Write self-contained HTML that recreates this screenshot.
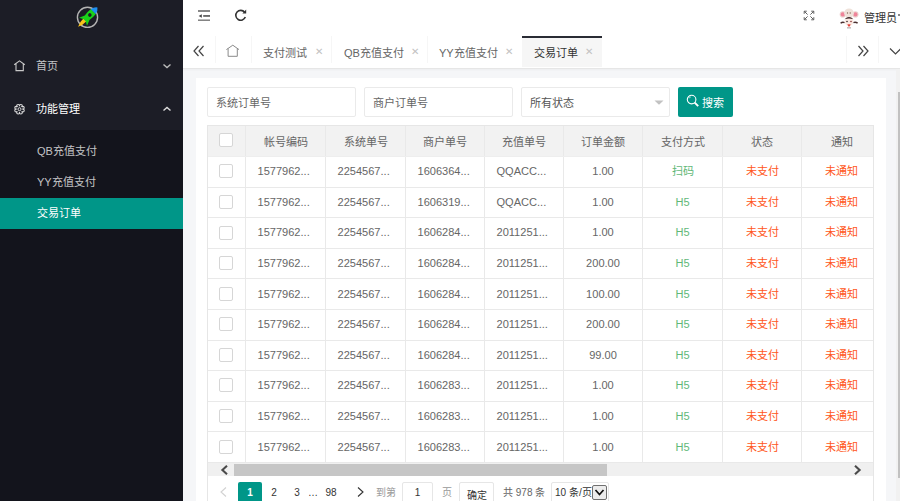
<!DOCTYPE html>
<html lang="zh-CN">
<head>
<meta charset="utf-8">
<style>
*{margin:0;padding:0;box-sizing:border-box;}
html,body{width:900px;height:501px;overflow:hidden;background:#f5f6f8;font-family:"Liberation Sans",sans-serif;font-size:11.05px;color:#666;}
.abs{position:absolute;}
#side{position:absolute;left:0;top:0;width:183px;height:501px;background:#1c1d26;}
#side .child{position:absolute;left:0;top:130px;width:183px;height:372px;background:#13141c;}
.mi{position:absolute;left:36px;color:rgba(255,255,255,.75);white-space:nowrap;line-height:12px;}
#header{position:absolute;left:183px;top:0;width:717px;height:36px;background:#fff;}
#tabs{position:absolute;left:183px;top:36px;width:717px;height:33px;background:#fff;border-bottom:1px solid #e6e6e6;box-shadow:0 1px 2px rgba(0,0,0,.04);}
.sep{position:absolute;top:0;width:1px;height:27px;background:#f6f6f6;}
.tt{position:absolute;top:10.5px;line-height:12px;color:#666;white-space:nowrap;}
.tx{position:absolute;top:11px;line-height:10px;color:#c2c2c2;font-size:9.5px;}
#card{position:absolute;left:196px;top:78px;width:690px;height:430px;background:#fff;}
.inp{position:absolute;top:87px;height:30px;background:#fff;border:1px solid #eaeaea;border-radius:2px;}
.inp span{position:absolute;left:8px;top:9px;line-height:12px;color:#666;white-space:nowrap;}
#tv{position:absolute;left:207px;top:125px;width:667px;height:380px;border:1px solid #e6e6e6;overflow:hidden;}
table{border-collapse:collapse;table-layout:fixed;position:absolute;left:-1px;top:-1px;width:1074px;}
td,th{border:1px solid #e9e9e9;text-align:center;font-weight:normal;white-space:nowrap;overflow:hidden;color:#666;line-height:12px;padding:0;}
th{background:#f2f2f2;height:31px;padding-top:1.5px;border-bottom-color:#eeeeee;}
td{height:30.6px;padding-bottom:1px;}
.cb{display:inline-block;width:14px;height:14px;border:1px solid #d6d6d6;border-radius:2px;background:#fff;vertical-align:middle;position:relative;left:-1px;}
.g{color:#5fb878;}
.r{color:#ff5722;}
.pg{position:absolute;top:486.5px;line-height:12px;font-size:10px;text-align:center;white-space:nowrap;color:#333;}
.l{text-align:left;padding-left:11.5px;}
</style>
</head>
<body>
<div id="side">
  <div class="child"></div>
  <!-- logo -->
  <svg class="abs" style="left:72px;top:2px" width="32" height="32" viewBox="0 0 32 32">
    <circle cx="15.5" cy="15.3" r="10.1" fill="none" stroke="#b4b4b4" stroke-width="1.4"/>
    <g transform="translate(15.7,15.15) rotate(45)">
      <path d="M-2.1,3 Q-2.3,9.5 0,13.6 Q2.3,9.5 2.1,3 Z" fill="#f7c21a"/>
      <path d="M-3.5,-8 Q-4,-3 -3.3,0.8 L-5.6,6.6 L-1.8,4.4 L1.8,4.4 L5.6,6.6 L3.3,0.8 Q4,-3 3.5,-8 Z" fill="#19d219"/>
      <path d="M-3.5,-7.8 Q-3,-11.5 0,-13.8 Q3,-11.5 3.5,-7.8 Z" fill="#1e90f0"/>
      <circle cx="0" cy="-3" r="1.8" fill="#1c1d26"/>
    </g>
  </svg>
  <!-- home -->
  <svg class="abs" style="left:8px;top:54px" width="24" height="24" viewBox="0 0 24 24">
    <path d="M6.2 10.8 L11.5 6.9 L16.8 10.8 M8 9.5 V16.6 H15.3 V9.5" fill="none" stroke="#c8c8c8" stroke-width="1.1"/>
  </svg>
  <div class="mi" style="top:60px">首页</div>
  <svg class="abs" style="left:162px;top:62px" width="10" height="8" viewBox="0 0 10 8"><path d="M1.5 2.5 L5 5.5 L8.5 2.5" fill="none" stroke="#bbb" stroke-width="1.4"/></svg>
  <!-- gear -->
  <svg class="abs" style="left:8px;top:97px" width="24" height="24" viewBox="0 0 24 24">
    <g fill="none" stroke="#dcdcdc" stroke-width="1.05"><circle cx="14.73" cy="13.54" r="1.5"/><circle cx="12.84" cy="15.43" r="1.5"/><circle cx="10.16" cy="15.43" r="1.5"/><circle cx="8.27" cy="13.54" r="1.5"/><circle cx="8.27" cy="10.86" r="1.5"/><circle cx="10.16" cy="8.97" r="1.5"/><circle cx="12.84" cy="8.97" r="1.5"/><circle cx="14.73" cy="10.86" r="1.5"/></g>
    <circle cx="11.5" cy="12.2" r="2.9" fill="#1c1d26"/>
    <circle cx="11.5" cy="12.2" r="1.5" fill="none" stroke="#dcdcdc" stroke-width="1"/>
  </svg>
  <div class="mi" style="top:103px;color:#fff">功能管理</div>
  <svg class="abs" style="left:162px;top:105px" width="10" height="8" viewBox="0 0 10 8"><path d="M1.5 5.5 L5 2.5 L8.5 5.5" fill="none" stroke="#ddd" stroke-width="1.4"/></svg>
  <div class="mi" style="top:145px;left:37px">QB充值支付</div>
  <div class="mi" style="top:176px;left:37px">YY充值支付</div>
  <div class="abs" style="left:0;top:198px;width:183px;height:31px;background:#009688"></div>
  <div class="mi" style="top:207px;left:37px;color:#fff">交易订单</div>
</div>


<div id="header">
  <!-- fold icon -->
  <svg class="abs" style="left:14px;top:9px" width="14" height="14" viewBox="0 0 14 14">
    <rect x="1" y="1.3" width="12" height="1.4" fill="#555"/>
    <rect x="6.2" y="6.2" width="6.8" height="1.5" fill="#444"/>
    <path d="M1.6 6.95 L4.8 5.2 L4.8 8.7 Z" fill="#444"/>
    <rect x="1" y="10.5" width="12" height="1.4" fill="#777"/>
  </svg>
  <!-- refresh -->
  <svg class="abs" style="left:51px;top:8px" width="14" height="14" viewBox="0 0 14 14">
    <path d="M10.6 4.3 A4.9 4.9 0 1 0 11.3 9" fill="none" stroke="#333" stroke-width="1.6"/>
    <path d="M8.4 5.6 L12.2 5.6 L12.2 1.6 Z" fill="#333"/>
  </svg>
  <!-- fullscreen -->
  <svg class="abs" style="left:616px;top:6px" width="20" height="20" viewBox="0 0 20 20">
    <g fill="none" stroke="#5a5a5a" stroke-width="0.95">
      <path d="M5.2 7.8 V5.2 H7.8 M5.4 5.4 L8.6 8.6"/>
      <path d="M14.8 7.8 V5.2 H12.2 M14.6 5.4 L11.4 8.6"/>
      <path d="M5.2 11.2 V13.8 H7.8 M5.4 13.6 L8.6 10.4"/>
      <path d="M14.8 11.2 V13.8 H12.2 M14.6 13.6 L11.4 10.4"/>
    </g>
  </svg>
  <!-- avatar -->
  <svg class="abs" style="left:653px;top:4px" width="28" height="28" viewBox="0 0 28 28">
    <circle cx="6.8" cy="10.4" r="3.1" fill="#ead0cc"/>
    <circle cx="19.4" cy="10.4" r="3.1" fill="#ead0cc"/>
    <circle cx="6.8" cy="10.4" r="2.1" fill="#f0849a"/>
    <circle cx="19.4" cy="10.4" r="2.1" fill="#f0849a"/>
    <path d="M4.6 19.2 Q6.5 17.6 8.6 18.6 M21.6 19.2 Q19.5 17.6 17.4 18.6" stroke="#4a3030" stroke-width="1.5" fill="none"/>
    <circle cx="13" cy="9.2" r="4.8" fill="#efe2da"/>
    <circle cx="11.5" cy="9" r="0.7" fill="#8a6a5a"/>
    <circle cx="14.2" cy="9" r="0.7" fill="#8a6a5a"/>
    <ellipse cx="13" cy="17.6" rx="4.3" ry="4.3" fill="#fbe9e2"/>
    <path d="M8.6 15.2 Q13 10.8 17.4 15.2 Q13 13.6 8.6 15.2Z" fill="#3a2424"/>
    <circle cx="11" cy="17.5" r="0.8" fill="#3a2a2a"/>
    <circle cx="15" cy="17.5" r="0.8" fill="#8a3a3a"/>
    <path d="M11.2 20.6 Q13 19.8 14.8 20.6 L13 23Z" fill="#e23a34"/>
    <rect x="11" y="23" width="4" height="1.6" fill="#c8c0c0"/>
  </svg>
  <div class="abs" style="left:681px;top:11.5px;line-height:12px;color:#333;white-space:nowrap">管理员</div>
  <div class="abs" style="left:715px;top:14px;width:2px;height:1.5px;background:#888"></div>
</div>

<div id="tabs">
  <svg class="abs" style="left:10px;top:9px" width="12" height="12" viewBox="0 0 12 12"><path d="M5.5 1 L1 6 L5.5 11 M10.5 1 L6 6 L10.5 11" fill="none" stroke="#444" stroke-width="1.2"/></svg>
  <div class="sep" style="left:32px"></div>
  <svg class="abs" style="left:42px;top:8px" width="16" height="14" viewBox="0 0 16 14"><path d="M1.4 5.6 L7.8 1.2 L14 5.6 M3.1 4.5 V12.3 H12.3 V4.5" fill="none" stroke="#8a8a8a" stroke-width="1"/></svg>
  <div class="sep" style="left:68px"></div>
  <div class="tt" style="left:80px">支付测试</div><div class="tx" style="left:132px">✕</div>
  <div class="sep" style="left:148px"></div>
  <div class="tt" style="left:161px">QB充值支付</div><div class="tx" style="left:228px">✕</div>
  <div class="sep" style="left:244px"></div>
  <div class="tt" style="left:256px">YY充值支付</div><div class="tx" style="left:322px">✕</div>
  <div class="abs" style="left:339px;top:0;width:80px;height:31px;background:#f6f6f6;border-top:2px solid #292b34"></div>
  <div class="tt" style="left:351px;color:#333">交易订单</div><div class="tx" style="left:402px">✕</div>
  <div class="sep" style="left:663px"></div>
  <svg class="abs" style="left:674px;top:9px" width="12" height="12" viewBox="0 0 12 12"><path d="M1.5 1 L6 6 L1.5 11 M6.5 1 L11 6 L6.5 11" fill="none" stroke="#444" stroke-width="1.2"/></svg>
  <div class="sep" style="left:695px"></div>
  <svg class="abs" style="left:706px;top:11px" width="14" height="9" viewBox="0 0 14 9"><path d="M1 1.5 L6.5 7 L12 1.5" fill="none" stroke="#444" stroke-width="1.2"/></svg>
</div>

<div id="card"></div>
<div class="inp" style="left:207px;width:149px"><span>系统订单号</span></div>
<div class="inp" style="left:364px;width:149px"><span>商户订单号</span></div>
<div class="inp" style="left:521px;width:149px"><span style="color:#555">所有状态</span>
  <svg class="abs" style="left:131.5px;top:12px" width="10" height="6" viewBox="0 0 10 6"><path d="M0.5 0.5 L9.5 0.5 L5 4.8Z" fill="#c2c2c2"/></svg>
</div>
<div class="abs" style="left:678px;top:87px;width:55px;height:30px;background:#009688;border-radius:2px;">
  <svg class="abs" style="left:8px;top:7px" width="14" height="14" viewBox="0 0 14 14"><circle cx="5.6" cy="5.6" r="4.3" fill="none" stroke="#fff" stroke-width="1.1"/><path d="M3.4 4.2 Q3.6 3.2 4.6 2.9" fill="none" stroke="#fff" stroke-width="0.8"/><path d="M8.7 8.7 L12.2 12.2" stroke="#fff" stroke-width="1.9"/></svg>
  <div class="abs" style="left:24px;top:10px;line-height:12px;color:#fff;white-space:nowrap">搜索</div>
</div>

<div id="tv">
<table>
<colgroup><col style="width:38px"><col style="width:80px"><col style="width:80px"><col style="width:79px"><col style="width:79px"><col style="width:79px"><col style="width:80px"><col style="width:79px"><col style="width:80px"><col style="width:80px"><col style="width:80px"><col style="width:80px"><col style="width:80px"><col style="width:80px"></colgroup>
<tr><th><span class="cb" style="top:-1.5px;left:-1px"></span></th><th>帐号编码</th><th>系统单号</th><th>商户单号</th><th>充值单号</th><th>订单金额</th><th>支付方式</th><th>状态</th><th>通知</th><th>通知时间</th><th>创建时间</th><th>操作</th><th></th><th></th></tr>
<tr><td><span class="cb"></span></td><td class="l">1577962...</td><td class="l">2254567...</td><td class="l">1606364...</td><td class="l">QQACC...</td><td>1.00</td><td class="g">扫码</td><td class="r">未支付</td><td class="r">未通知</td><td></td><td></td><td></td><td></td><td></td></tr>
<tr><td><span class="cb"></span></td><td class="l">1577962...</td><td class="l">2254567...</td><td class="l">1606319...</td><td class="l">QQACC...</td><td>1.00</td><td class="g">H5</td><td class="r">未支付</td><td class="r">未通知</td><td></td><td></td><td></td><td></td><td></td></tr>
<tr><td><span class="cb"></span></td><td class="l">1577962...</td><td class="l">2254567...</td><td class="l">1606284...</td><td class="l">2011251...</td><td>1.00</td><td class="g">H5</td><td class="r">未支付</td><td class="r">未通知</td><td></td><td></td><td></td><td></td><td></td></tr>
<tr><td><span class="cb"></span></td><td class="l">1577962...</td><td class="l">2254567...</td><td class="l">1606284...</td><td class="l">2011251...</td><td>200.00</td><td class="g">H5</td><td class="r">未支付</td><td class="r">未通知</td><td></td><td></td><td></td><td></td><td></td></tr>
<tr><td><span class="cb"></span></td><td class="l">1577962...</td><td class="l">2254567...</td><td class="l">1606284...</td><td class="l">2011251...</td><td>100.00</td><td class="g">H5</td><td class="r">未支付</td><td class="r">未通知</td><td></td><td></td><td></td><td></td><td></td></tr>
<tr><td><span class="cb"></span></td><td class="l">1577962...</td><td class="l">2254567...</td><td class="l">1606284...</td><td class="l">2011251...</td><td>200.00</td><td class="g">H5</td><td class="r">未支付</td><td class="r">未通知</td><td></td><td></td><td></td><td></td><td></td></tr>
<tr><td><span class="cb"></span></td><td class="l">1577962...</td><td class="l">2254567...</td><td class="l">1606284...</td><td class="l">2011251...</td><td>99.00</td><td class="g">H5</td><td class="r">未支付</td><td class="r">未通知</td><td></td><td></td><td></td><td></td><td></td></tr>
<tr><td><span class="cb"></span></td><td class="l">1577962...</td><td class="l">2254567...</td><td class="l">1606283...</td><td class="l">2011251...</td><td>1.00</td><td class="g">H5</td><td class="r">未支付</td><td class="r">未通知</td><td></td><td></td><td></td><td></td><td></td></tr>
<tr><td><span class="cb"></span></td><td class="l">1577962...</td><td class="l">2254567...</td><td class="l">1606283...</td><td class="l">2011251...</td><td>1.00</td><td class="g">H5</td><td class="r">未支付</td><td class="r">未通知</td><td></td><td></td><td></td><td></td><td></td></tr>
<tr><td><span class="cb"></span></td><td class="l">1577962...</td><td class="l">2254567...</td><td class="l">1606283...</td><td class="l">2011251...</td><td>1.00</td><td class="g">H5</td><td class="r">未支付</td><td class="r">未通知</td><td></td><td></td><td></td><td></td><td></td></tr>
</table>
</div>


<!-- h scrollbar -->
<div class="abs" style="left:208px;top:463px;width:665px;height:13px;background:#f0f0f0"></div>
<div class="abs" style="left:234px;top:464px;width:373px;height:12px;background:#c6c6c6"></div>
<svg class="abs" style="left:219px;top:464px" width="11" height="12" viewBox="0 0 11 12"><path d="M8 1.8 L3.4 6 L8 10.2" fill="none" stroke="#4a4a4a" stroke-width="2.1"/></svg>
<svg class="abs" style="left:852px;top:464px" width="11" height="12" viewBox="0 0 11 12"><path d="M3 1.8 L7.6 6 L3 10.2" fill="none" stroke="#4a4a4a" stroke-width="2.1"/></svg>
<!-- pagination -->
<svg class="abs" style="left:219px;top:487px" width="9" height="10" viewBox="0 0 9 10"><path d="M7 0.5 L2 5 L7 9.5" fill="none" stroke="#d2d2d2" stroke-width="1.1"/></svg>
<div class="abs" style="left:238px;top:482px;width:24px;height:24px;background:#009688;border-radius:2px"></div>
<div class="pg" style="left:238px;width:24px;color:#fff;font-weight:bold">1</div>
<div class="pg" style="left:267px;width:14px">2</div>
<div class="pg" style="left:290px;width:14px">3</div>
<div class="pg" style="left:306px;width:14px">…</div>
<div class="pg" style="left:322px;width:18px">98</div>
<svg class="abs" style="left:356px;top:487px" width="9" height="10" viewBox="0 0 9 10"><path d="M2 0.5 L7 5 L2 9.5" fill="none" stroke="#333" stroke-width="1.1"/></svg>
<div class="pg" style="left:376px;width:20px;color:#999">到第</div>
<div class="abs" style="left:402px;top:482px;width:31px;height:24px;border:1px solid #e6e6e6;border-radius:2px"></div>
<div class="pg" style="left:402px;width:31px">1</div>
<div class="pg" style="left:441px;width:12px;color:#999">页</div>
<div class="abs" style="left:459px;top:482px;width:35px;height:24px;border:1px solid #e6e6e6;border-radius:2px"></div>
<div class="pg" style="left:459px;width:35px;top:490px;color:#333">确定</div>
<div class="pg" style="left:503px;width:40px;color:#666">共 978 条</div>
<div class="abs" style="left:551px;top:482px;width:58px;height:24px;border:1px solid #e6e6e6;border-radius:2px"></div>
<div class="pg" style="left:555px;width:36px;color:#333">10 条/页</div>
<div class="abs" style="left:592px;top:485px;width:15px;height:15px;border:1px solid #707070;border-radius:2px;background:#ececec"></div>
<svg class="abs" style="left:594px;top:488px" width="11" height="9" viewBox="0 0 11 9"><path d="M1.5 2 L5.5 6.5 L9.5 2" fill="none" stroke="#111" stroke-width="1.7"/></svg>
<div class="abs" style="left:896px;top:69px;width:4px;height:432px;background:#f1f1f1"></div>
<div class="abs" style="left:898px;top:92px;width:2px;height:386px;background:#c1c1c1"></div>
</body>
</html>
